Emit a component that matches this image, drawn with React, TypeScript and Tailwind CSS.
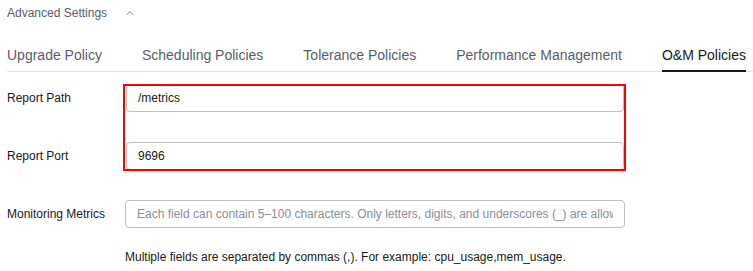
import { ChevronUp } from "lucide-react";

const tabs = ["Upgrade Policy", "Scheduling Policies", "Tolerance Policies", "Performance Management", "O&M Policies"];

export default function App() {
  return (
    <main className="h-[271px] w-[753px] overflow-hidden bg-white font-['Liberation_Sans',Arial,sans-serif] text-[#191919]">
      <div className="flex h-[26px] items-center pl-[7px] text-[12px] text-[#575d6c]">
        <span>Advanced Settings</span>
        <ChevronUp size={12} strokeWidth={1.5} className="ml-[17px] text-[#575d6c]" />
      </div>

      <div className="ml-[7px] mt-[16px] flex h-[30px] gap-[40px] border-b border-[#e5e5e5]">
        {tabs.map((tab, i) => (
          <div
            key={tab}
            className={
              i === tabs.length - 1
                ? "relative h-full whitespace-nowrap pt-[1px] text-[14px] leading-[24px] text-[#191919]"
                : "relative h-full whitespace-nowrap pt-[1px] text-[14px] leading-[24px] text-[#575d6c]"
            }
          >
            {tab}
            {i === tabs.length - 1 && <div className="absolute -bottom-[1px] left-0 right-0 h-[2px] bg-[#191919]" />}
          </div>
        ))}
      </div>

      <div className="relative mt-[12px] pl-[7px] text-[12px]">
        <div className="flex h-[28px] items-center">
          <label className="w-[119px] shrink-0">Report Path</label>
          <div className="flex h-[28px] w-[498px] items-center rounded-[4px] border border-[#c0c0c0] px-[11px]">/metrics</div>
        </div>
        <div className="mt-[30px] flex h-[28px] items-center">
          <label className="w-[119px] shrink-0">Report Port</label>
          <div className="flex h-[28px] w-[498px] items-center rounded-[4px] border border-[#c0c0c0] px-[11px]">9696</div>
        </div>
        <div className="pointer-events-none absolute left-[123px] top-0 h-[87px] w-[503px] border-2 border-[#ff0000]" />

        <div className="mt-[30px] flex h-[28px] items-center">
          <label className="w-[118px] shrink-0">Monitoring Metrics</label>
          <input
            readOnly
            placeholder="Each field can contain 5–100 characters. Only letters, digits, and underscores (_) are allowed."
            className="h-[28px] w-[500px] rounded-[4px] border border-[#c0c0c0] px-[11px] text-[12px] outline-none placeholder:text-[#8a8e99]"
          />
        </div>
        <p className="ml-[118px] mt-[20px]">Multiple fields are separated by commas (,). For example: cpu_usage,mem_usage.</p>
      </div>
    </main>
  );
}
